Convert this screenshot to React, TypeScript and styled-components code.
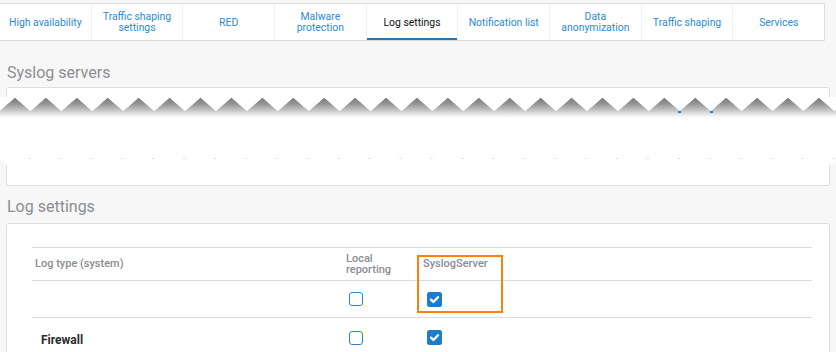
import React from "react";
import styled, { createGlobalStyle } from "styled-components";

const Global = createGlobalStyle`
  html, body { margin: 0; padding: 0; background: #f7f7f7; }
  body {
    font-family: Roboto, "Liberation Sans", Arial, sans-serif;
    width: 836px; height: 352px; overflow: hidden;
  }
  * { box-sizing: border-box; }
`;

const Page = styled.div`
  padding-top: 3px;
`;

const TabBar = styled.nav`
  display: flex;
  width: 825px;
  height: 38px;
  background: #fff;
  border: 1px solid #dcdcdc;
  border-left: none;
`;

const Tab = styled.div<{ $active?: boolean; $first?: boolean }>`
  flex: 1 1 0;
  display: flex;
  align-items: center;
  justify-content: center;
  text-align: center;
  font-size: 10.4px;
  line-height: 11px;
  color: ${(p) => (p.$active ? "#111" : "#2b8ad3")};
  border-left: ${(p) => (p.$first ? "none" : "1px solid #f0f0f0")};
  box-shadow: ${(p) => (p.$active ? "inset 0 -2px 0 #2677b8" : "none")};
`;

const SectionTitle = styled.h2<{ $top: number; $bottom: number }>`
  margin: 0;
  padding: ${(p) => p.$top}px 0 ${(p) => p.$bottom}px 7px;
  font-size: 16px;
  font-weight: 400;
  line-height: 20px;
  color: #8b8e91;
`;

const Card = styled.section<{ $h: number }>`
  position: relative;
  margin: 0 6px 0 6px;
  height: ${(p) => p.$h}px;
  background: #fff;
  border: 1px solid #dedede;
  border-radius: 3px;
`;

const LogBody = styled.div`
  padding: 23px 17px 0 25px;
`;

const Torn = styled.svg`
  position: absolute;
  left: -7px;
  top: 9px;
  overflow: hidden;
`;

const Table = styled.div`
  position: relative;
  border-top: 1px solid #dcdcdc;
`;

const Row = styled.div<{ $h: number }>`
  display: grid;
  grid-template-columns: 311px 77px 1fr;
  align-items: center;
  height: ${(p) => p.$h}px;
  border-bottom: 1px solid #dcdcdc;
`;

const HeadCell = styled.div`
  padding-left: 3px;
  font-size: 11px;
  line-height: 11.5px;
  font-weight: 500;
  color: #8a8d91;
`;

const LabelCell = styled.div`
  padding: 4px 0 0 9px;
  font-size: 12px;
  font-weight: 700;
  color: #2b2b2b;
`;

const BoxCell = styled.div<{ $pad: number }>`
  display: flex;
  align-items: center;
  padding-left: ${(p) => p.$pad}px;
`;

const Unchecked = styled.span`
  display: block;
  width: 14px;
  height: 14px;
  border: 1.5px solid #2d86cf;
  border-radius: 3px;
  background: #fff;
`;

const Checked = styled.span`
  display: flex;
  align-items: center;
  justify-content: center;
  width: 15px;
  height: 15px;
  border-radius: 2.5px;
  background: #1d7dcc;
`;

const Highlight = styled.div`
  position: absolute;
  left: 385px;
  top: 7px;
  width: 86px;
  height: 58px;
  border: 2px solid #f7830f;
  pointer-events: none;
`;

const Check = () => (
  <Checked>
    <svg width="11" height="11" viewBox="0 0 11 11">
      <path d="M2 5.6 L4.4 8 L9 3.2" fill="none" stroke="#fff" strokeWidth="2.3" strokeLinecap="round" strokeLinejoin="round" />
    </svg>
  </Checked>
);

const period = 30.92;
const zigPoints = () => {
  const pts: string[] = [];
  for (let k = -1; k < 29; k++) {
    const px = 15 + period * k;
    pts.push(`${(px - period / 2).toFixed(2)},14`);
    pts.push(`${px.toFixed(2)},0.5`);
  }
  return pts.join(" L");
};

const TornEdge = () => {
  const dashes = [];
  for (let k = 0; k < 27; k++) dashes.push(28 + period * k);
  const zig = zigPoints();
  return (
    <Torn width="836" height="70" viewBox="0 0 836 70">
      <defs>
        <linearGradient id="tornGrad" gradientUnits="userSpaceOnUse" x1="0" y1="0.5" x2="0" y2="21">
          <stop offset="0" stopColor="#7a7a7a" />
          <stop offset="0.3" stopColor="#939393" />
          <stop offset="0.62" stopColor="#c4c4c4" />
          <stop offset="0.85" stopColor="#ececec" />
          <stop offset="1" stopColor="#ffffff" />
        </linearGradient>
        <filter id="soft" x="-2%" y="-20%" width="104%" height="140%">
          <feGaussianBlur stdDeviation="0.7" />
        </filter>
      </defs>
      <polygon points="0,10 836,10 836,62 830,68 6,68 0,62" fill="#fff" />
      {dashes.map((x) => (
        <rect key={x} x={x} y={61} width={3} height={1} fill="#e6e6e6" />
      ))}
      <path d={`M-20,14 L${zig} L860,14 L860,22 L-20,22 Z`} fill="url(#tornGrad)" filter="url(#soft)" />
      <path d={`M-20,-2 L-20,14 L${zig} L860,14 L860,-2 Z`} fill="#fff" />
      <rect x={678} y={14} width={3} height={2} fill="#1a7fd0" />
      <rect x={710} y={14} width={3} height={2} fill="#1a7fd0" />
    </Torn>
  );
};

const tabs: { label: React.ReactNode; active?: boolean }[] = [
  { label: "High availability" },
  { label: <>Traffic shaping<br />settings</> },
  { label: "RED" },
  { label: <>Malware<br />protection</> },
  { label: "Log settings", active: true },
  { label: "Notification list" },
  { label: <>Data<br />anonymization</> },
  { label: "Traffic shaping" },
  { label: "Services" },
];

export default function App() {
  return (
    <Page>
      <Global />
      <TabBar>
        {tabs.map((t, i) => (
          <Tab key={i} $active={t.active} $first={i === 0}>
            <span>{t.label}</span>
          </Tab>
        ))}
      </TabBar>

      <SectionTitle $top={22} $bottom={4}>Syslog servers</SectionTitle>
      <Card $h={99}>
        <TornEdge />
      </Card>

      <SectionTitle $top={11} $bottom={6}>Log settings</SectionTitle>
      <Card $h={140}>
        <LogBody>
          <Table>
            <Row $h={33}>
              <HeadCell>Log type (system)</HeadCell>
              <HeadCell>Local<br />reporting</HeadCell>
              <HeadCell>SyslogServer</HeadCell>
            </Row>
            <Row $h={37}>
              <div />
              <BoxCell $pad={6}><Unchecked /></BoxCell>
              <BoxCell $pad={7}><Check /></BoxCell>
            </Row>
            <Row $h={40}>
              <LabelCell>Firewall</LabelCell>
              <BoxCell $pad={6}><Unchecked /></BoxCell>
              <BoxCell $pad={7}><Check /></BoxCell>
            </Row>
            <Highlight />
          </Table>
        </LogBody>
      </Card>
    </Page>
  );
}
